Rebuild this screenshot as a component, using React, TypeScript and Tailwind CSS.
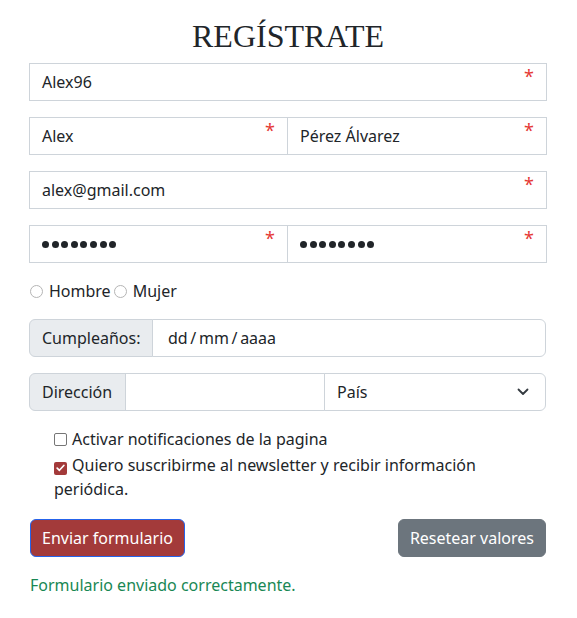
import React from "react";

const font = { fontFamily: '"Noto Sans", "Open Sans", sans-serif' };

function Star() {
  return (
    <span className="absolute right-[12px] top-[3px] text-[18px] leading-none text-[#e53935]">*</span>
  );
}

function Dots() {
  return (
    <div className="flex gap-[2.6px]">
      {Array.from({ length: 8 }).map((_, i) => (
        <span key={i} className="block w-[7px] h-[7px] rounded-full bg-[#212529]" />
      ))}
    </div>
  );
}

function Field({ children, className = "" }: { children?: React.ReactNode; className?: string }) {
  return (
    <div className={`relative h-[38px] border border-[#ced4da] bg-white flex items-center px-[12px] text-[16px] text-[#212529] ${className}`}>
      {children}
      <Star />
    </div>
  );
}

function Radio({ label }: { label: string }) {
  return (
    <label className="flex items-center">
      <span className="block w-[13px] h-[13px] rounded-full border border-[#b5b5b5] bg-white mr-[6px]" />
      <span>{label}</span>
    </label>
  );
}

export default function App() {
  return (
    <div className="w-[577px] min-h-[618px] bg-white text-[#212529]" style={font}>
      <div className="ml-[29px] w-[518px] pt-[20px]">
        <h1
          className="text-center text-[32px] leading-[32px] mb-[11px] text-[#212529]"
          style={{ fontFamily: '"Liberation Serif", "Times New Roman", serif' }}
        >
          REGÍSTRATE
        </h1>

        <Field className="mb-[16px]">Alex96</Field>

        <div className="flex mb-[16px]">
          <Field className="w-[259px]">Alex</Field>
          <Field className="w-[260px] -ml-px">Pérez Álvarez</Field>
        </div>

        <Field className="mb-[16px]">alex@gmail.com</Field>

        <div className="flex mb-[16px]">
          <Field className="w-[259px]"><Dots /></Field>
          <Field className="w-[260px] -ml-px"><Dots /></Field>
        </div>

        <div className="flex items-center h-[24px] text-[16px] leading-[24px] gap-[3px] mb-[16px] pl-px">
          <Radio label="Hombre" />
          <Radio label="Mujer" />
        </div>

        <div className="flex h-[38px] mb-[16px] text-[16px] w-[517px]">
          <div className="flex items-center px-[12px] bg-[#e9ecef] border border-[#ced4da] rounded-l-[6px] w-[124px]">
            Cumpleaños:
          </div>
          <div className="flex-1 flex items-center pl-[15px] border border-[#ced4da] -ml-px rounded-r-[6px] bg-white [word-spacing:-1.5px]">
            dd / mm / aaaa
          </div>
        </div>

        <div className="flex h-[38px] mb-[16px] text-[16px] w-[517px]">
          <div className="flex items-center px-[12px] bg-[#e9ecef] border border-[#ced4da] rounded-l-[6px] w-[97px]">
            Dirección
          </div>
          <div className="w-[200px] border border-[#ced4da] -ml-px bg-white" />
          <div className="flex-1 flex items-center justify-between pl-[12px] pr-[16px] border border-[#ced4da] -ml-px rounded-r-[6px] bg-white">
            <span>País</span>
            <svg width="12" height="8" viewBox="0 0 12 8" fill="none">
              <polyline points="1.5,1.5 6,6 10.5,1.5" stroke="#343a40" strokeWidth="1.8" strokeLinecap="round" strokeLinejoin="round" />
            </svg>
          </div>
        </div>

        <div className="pl-[25px] pr-[25px] text-[16px] leading-[24px]">
          <div className="mb-[2px]">
            <span className="inline-block align-[-1px] w-[13px] h-[13px] border border-[#767676] rounded-[2px] bg-white mr-[5px]" />
            Activar notificaciones de la pagina
          </div>
          <div>
            <span className="inline-flex items-center justify-center align-[-1px] w-[13px] h-[13px] rounded-[2px] bg-[#a33a3a] mr-[5px]">
              <svg width="9" height="8" viewBox="0 0 9 8" fill="none">
                <polyline points="1.2,4.2 3.4,6.3 7.8,1.5" stroke="white" strokeWidth="1.7" strokeLinecap="round" strokeLinejoin="round" />
              </svg>
            </span>
            Quiero suscribirme al newsletter y recibir información periódica.
          </div>
        </div>

        <div className="flex justify-between mt-[18px] w-[517px]">
          <button className="h-[38px] px-[11px] rounded-[6px] bg-[#a33a3a] border border-[#2563eb] text-white text-[16px] ml-px" style={font}>
            Enviar formulario
          </button>
          <button className="h-[38px] px-[11px] rounded-[6px] bg-[#6c757d] border border-[#6c757d] text-white text-[16px]" style={font}>
            Resetear valores
          </button>
        </div>

        <div className="mt-[16px] text-[16px] leading-[24px] text-[#198754] ml-px">
          Formulario enviado correctamente.
        </div>
      </div>
    </div>
  );
}
